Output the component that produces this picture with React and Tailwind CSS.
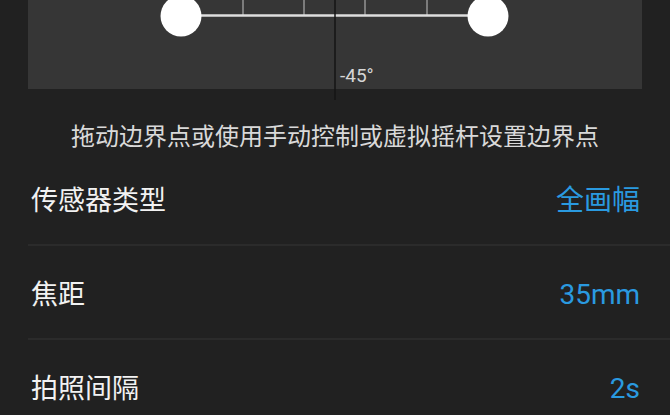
const rows = [
  { label: '传感器类型', value: '全画幅' },
  { label: '焦距', value: '35mm' },
  { label: '拍照间隔', value: '2s' },
];

const BoundaryCanvas = () => (
  <div className="relative h-[100px]">
    <div className="ml-[28px] w-[614px] h-[89px] bg-[#363636]" />
    {/* handles, ticks and center marker */}
    <svg className="absolute left-0 top-0" width="670" height="100" viewBox="0 0 670 100">
      {[243, 304, 365, 427].map((x) => (
        <line key={x} x1={x} y1="0" x2={x} y2="15" stroke="#7c7c7c" strokeWidth="2" />
      ))}
      <line x1="181" y1="15.5" x2="488" y2="15.5" stroke="#dedede" strokeWidth="2.5" />
      <line x1="335" y1="0" x2="335" y2="100" stroke="#141414" strokeWidth="1.5" />
      <circle cx="181" cy="16" r="20.5" fill="#ffffff" />
      <circle cx="488" cy="16" r="20.5" fill="#ffffff" />
    </svg>
    <span className="absolute left-[340px] top-[64px] text-[19px] leading-[24px] text-[#d6d6d6] font-['Roboto',sans-serif]">
      -45°
    </span>
  </div>
);

export default function App() {
  return (
    <div className="w-[670px] h-[415px] overflow-hidden bg-[#212121] font-['Roboto','Noto_Sans_CJK_SC',sans-serif]">
      <BoundaryCanvas />
      <p className="mt-[22px] text-center text-[24px] leading-[30px] text-[#d9d9d9]">
        拖动边界点或使用手动控制或虚拟摇杆设置边界点
      </p>
      <div className="ml-[28px]">
        {rows.map((row) => (
          <div
            key={row.label}
            className="flex items-center justify-between h-[94px] pt-[6px] pl-[3px] pr-[30px] border-b-2 border-[#2b2b2b]"
          >
            <span className="text-[27px] text-[#f2f2f2]">{row.label}</span>
            <span className="text-[28px] text-[#2a9ae0]">{row.value}</span>
          </div>
        ))}
      </div>
    </div>
  );
}
